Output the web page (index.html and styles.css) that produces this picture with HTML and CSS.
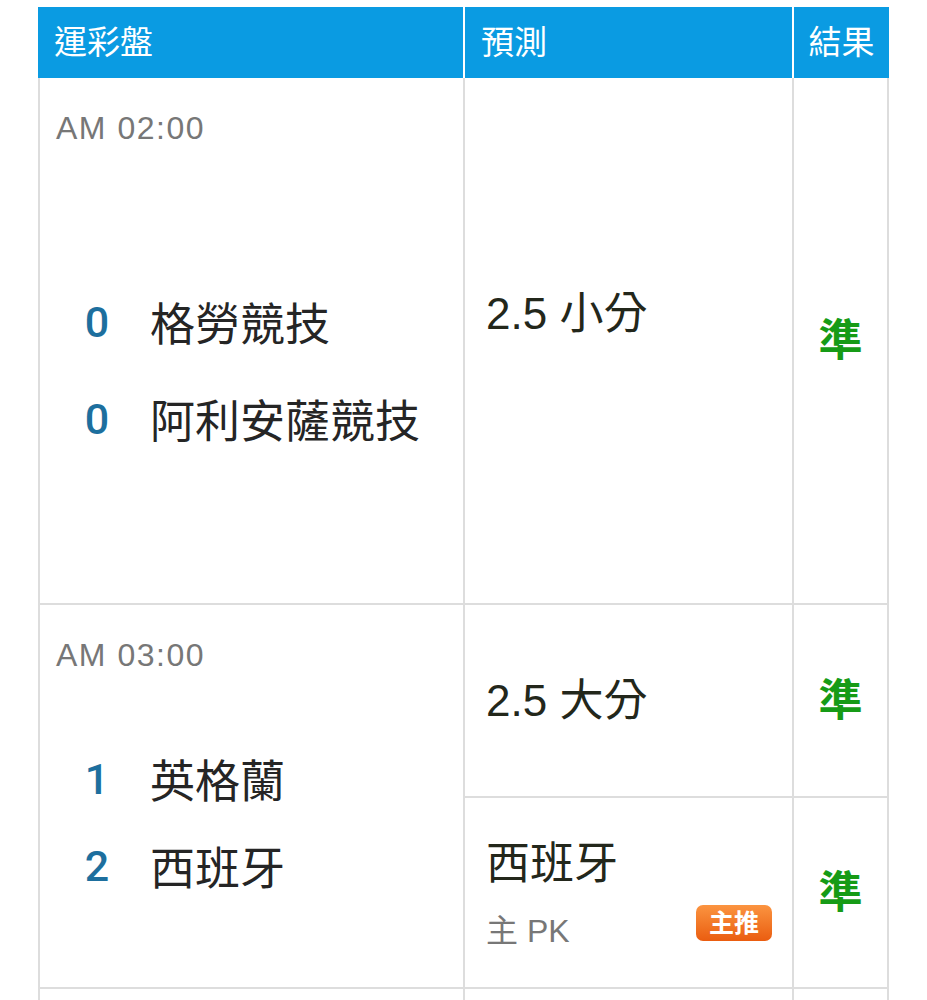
FILE: index.html
```html
<!DOCTYPE html>
<html lang="zh-Hant">
<head>
<meta charset="utf-8">
<title>運彩盤</title>
<link rel="stylesheet" href="styles.css">
</head>
<body>
<div class="board">
  <div class="head">
    <div class="hcell">運彩盤</div>
    <div class="hcell">預測</div>
    <div class="hcell hcell-center">結果</div>
  </div>
  <div class="grid">
    <div class="cell match">
      <div class="time">AM 02:00</div>
      <div class="teams teams-loose">
        <div class="team"><span class="score">0</span><span class="name">格勞競技</span></div>
        <div class="team"><span class="score">0</span><span class="name">阿利安薩競技</span></div>
      </div>
    </div>
    <div class="cell pick pick-top">
      <div class="pick-name">2.5 小分</div>
    </div>
    <div class="cell result"><span class="hit">準</span></div>

    <div class="cell match match-span">
      <div class="time">AM 03:00</div>
      <div class="teams teams-tight">
        <div class="team"><span class="score">1</span><span class="name">英格蘭</span></div>
        <div class="team"><span class="score">2</span><span class="name">西班牙</span></div>
      </div>
    </div>
    <div class="cell pick pick-center">
      <div class="pick-name">2.5 大分</div>
    </div>
    <div class="cell result"><span class="hit">準</span></div>

    <div class="cell pick pick-detail">
      <div class="pick-name">西班牙</div>
      <div class="pick-meta">
        <span>主 PK</span>
        <span class="badge">主推</span>
      </div>
    </div>
    <div class="cell result"><span class="hit">準</span></div>

    <div class="cell"></div>
    <div class="cell"></div>
    <div class="cell"></div>
  </div>
</div>
</body>
</html>
```

FILE: styles.css
```css
html, body {
  margin: 0;
  padding: 0;
  background: #ffffff;
}

body {
  font-family: "Liberation Sans", "Noto Sans CJK TC", sans-serif;
  color: #222222;
  overflow: hidden;
  height: 1000px;
}

.board {
  margin: 7px 0 0 38px;
  width: 851px;
}

.head {
  display: grid;
  grid-template-columns: 425px 327px 95px;
  column-gap: 2px;
  height: 71px;
  background: #ffffff;
}

.hcell {
  background: #0a9be2;
  color: #ffffff;
  font-size: 33px;
  line-height: 33px;
  display: flex;
  align-items: center;
  padding-left: 16px;
}

.hcell-center {
  padding-left: 0;
  justify-content: center;
}

.grid {
  display: grid;
  grid-template-columns: 423px 327px 93px;
  grid-template-rows: 525px 191px 189px 120px;
  gap: 2px;
  padding: 0 2px 2px;
  background: #dddddd;
}

.cell {
  background: #ffffff;
}

.match {
  padding: 34px 0 0 16px;
}

.match-span {
  grid-row: span 2;
}

.time {
  font-size: 32px;
  line-height: 32px;
  letter-spacing: 1.5px;
  color: #777777;
}

.teams {
  display: flex;
  flex-direction: column;
}

.teams-loose {
  margin-top: 160px;
  gap: 53px;
}

.teams-tight {
  margin-top: 90px;
  gap: 43px;
}

.team {
  display: flex;
  font-size: 45px;
  line-height: 44px;
}

.score {
  width: 44px;
  margin: 0 31px 0 19px;
  text-align: center;
  color: #1d6f9e;
  font-family: Roboto, "Liberation Sans", sans-serif;
  font-size: 43px;
  line-height: 36px;
  font-weight: 500;
}

.name {
  color: #252525;
}

.pick {
  padding-left: 21px;
  padding-right: 20px;
  color: #23271b;
}

.pick-top {
  padding-top: 214px;
}

.pick-center {
  display: flex;
  align-items: center;
}

.pick-detail {
  padding-top: 44px;
}

.pick-name {
  font-size: 44px;
  line-height: 44px;
}

.pick-meta {
  margin-top: 29px;
  display: flex;
  justify-content: space-between;
  align-items: flex-start;
  font-size: 32px;
  line-height: 32px;
  color: #777777;
}

.badge {
  width: 76px;
  height: 36px;
  margin: -10px 0 -4px;
  border-radius: 7px;
  background: linear-gradient(#fb9440, #ea5d10);
  color: #ffffff;
  font-size: 25px;
  line-height: 25px;
  font-weight: bold;
  display: flex;
  align-items: center;
  justify-content: center;
}

.result {
  display: flex;
  align-items: center;
  justify-content: center;
}

.hit {
  font-size: 44px;
  line-height: 44px;
  font-weight: bold;
  color: #169b16;
}
```
